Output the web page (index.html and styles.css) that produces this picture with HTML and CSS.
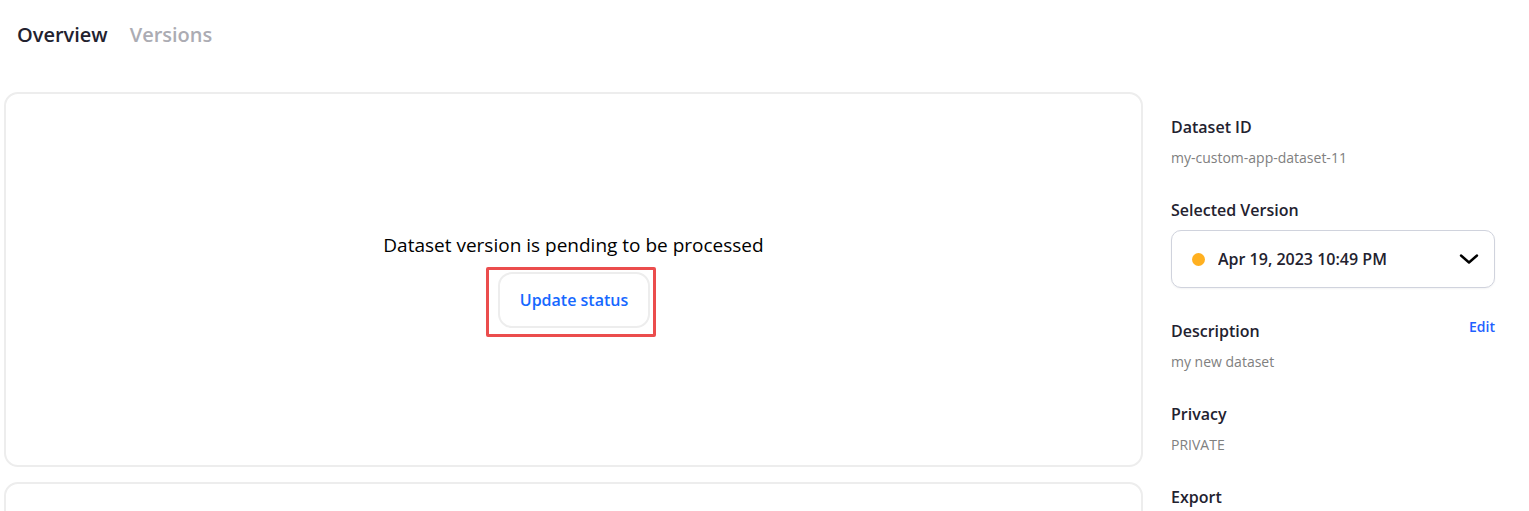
FILE: index.html
```html
<!DOCTYPE html>
<html lang="en">
<head>
<meta charset="utf-8">
<title>Dataset overview</title>
<link rel="stylesheet" href="styles.css">
</head>
<body>
<nav class="tabs">
  <a class="tab tab-active" href="#overview" aria-current="page">Overview</a>
  <a class="tab" href="#versions">Versions</a>
</nav>
<div class="layout">
  <main class="panels">
    <section class="panel">
      <p class="status-text">Dataset version is pending to be processed</p>
      <div class="highlight">
        <button class="update-button" type="button">Update status</button>
      </div>
    </section>
    <section class="panel"></section>
  </main>
  <aside class="sidebar">
    <section class="field">
      <h2 class="field-title">Dataset ID</h2>
      <p class="field-value">my-custom-app-dataset-11</p>
    </section>
    <section class="field">
      <label class="field-title" for="version">Selected Version</label>
      <div class="version-picker">
        <span class="status-dot"></span>
        <select class="version-select" id="version">
          <option>Apr 19, 2023 10:49 PM</option>
        </select>
        <svg class="chevron" viewBox="0 0 20 12" aria-hidden="true"><path d="M2 2.5l8 7L18 2.5"/></svg>
      </div>
    </section>
    <section class="field">
      <div class="field-header">
        <h2 class="field-title">Description</h2>
        <a class="edit-link" href="#edit">Edit</a>
      </div>
      <p class="field-value">my new dataset</p>
    </section>
    <section class="field">
      <h2 class="field-title">Privacy</h2>
      <p class="field-value">PRIVATE</p>
    </section>
    <section class="field">
      <h2 class="field-title">Export</h2>
    </section>
  </aside>
</div>
</body>
</html>
```

FILE: styles.css
```css
* {
  box-sizing: border-box;
}

body {
  margin: 0;
  background: #fff;
  color: #23222f;
  font-family: "Open Sans", "Noto Sans", sans-serif;
  font-size: 16px;
}

h2,
p {
  margin: 0;
}

.tabs {
  display: flex;
  gap: 22px;
  padding: 20px 17px 42px;
}

.tab {
  color: #acacb3;
  font-size: 20px;
  font-weight: 600;
  line-height: 30px;
  text-decoration: none;
}

.tab-active {
  color: #23222f;
}

.layout {
  display: flex;
  gap: 28px;
  padding: 0 34px 0 4px;
}

.panels {
  display: flex;
  flex: 1;
  flex-direction: column;
  gap: 15px;
}

.panel {
  display: flex;
  flex-direction: column;
  align-items: center;
  gap: 9px;
  padding: 138px 20px 128px;
  border: 2px solid #ededed;
  border-radius: 14px;
}

.status-text {
  color: #000;
  font-size: 19px;
  line-height: 26px;
}

.highlight {
  margin-right: 5px;
  padding: 2px 3px 6px 9px;
  border: 3px solid #eb4d4d;
  border-radius: 2px;
}

.update-button {
  display: block;
  height: 56px;
  padding: 0 20px;
  border: 2px solid #ededed;
  border-radius: 14px;
  background: #fff;
  color: #1668ff;
  font: inherit;
  font-weight: 600;
}

.sidebar {
  display: flex;
  flex: 0 0 324px;
  flex-direction: column;
  gap: 29px;
  padding-top: 23px;
}

.field {
  display: flex;
  flex-direction: column;
  gap: 8px;
}

.field-title {
  font-size: 16px;
  font-weight: 600;
  line-height: 24px;
}

.field-value {
  color: #808080;
  font-size: 14px;
  line-height: 22px;
}

.field-header {
  display: flex;
  justify-content: space-between;
}

.edit-link {
  color: #1f61ff;
  font-size: 14px;
  font-weight: 600;
  line-height: 16px;
  text-decoration: none;
}

.version-picker {
  display: grid;
  align-items: center;
  margin-bottom: 2px;
}

.version-picker > * {
  grid-area: 1 / 1;
}

.version-select {
  width: 100%;
  height: 58px;
  padding: 0 46px;
  border: 1px solid #d0d3dd;
  border-radius: 10px;
  background: #fff;
  box-shadow: 0 1px 2px #1018280d;
  color: inherit;
  font: inherit;
  font-weight: 600;
  appearance: none;
}

.status-dot {
  z-index: 1;
  width: 13px;
  height: 13px;
  margin-left: 21px;
  border-radius: 50%;
  background: #ffb020;
  pointer-events: none;
}

.chevron {
  z-index: 1;
  justify-self: end;
  width: 20px;
  height: 12px;
  margin-right: 16px;
  fill: none;
  stroke: #000;
  stroke-linecap: round;
  stroke-linejoin: round;
  stroke-width: 2.4;
  pointer-events: none;
}
```
